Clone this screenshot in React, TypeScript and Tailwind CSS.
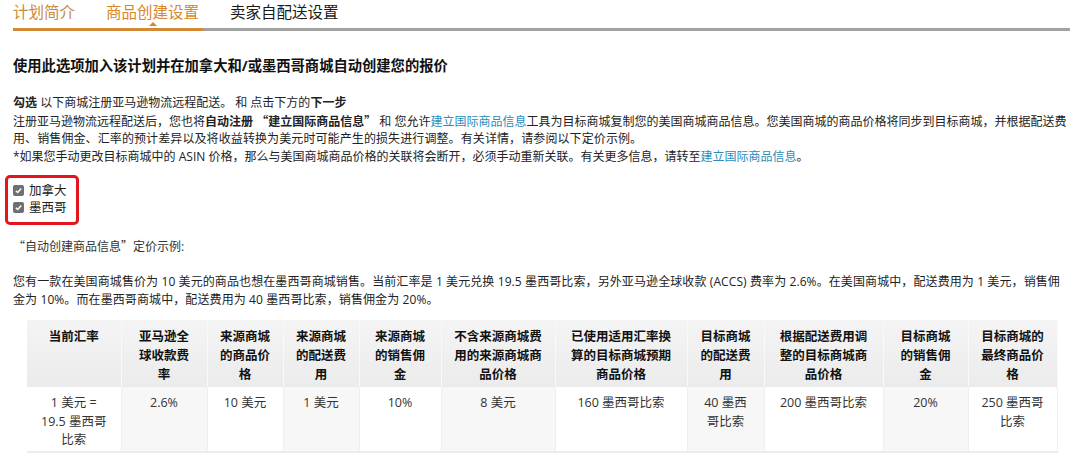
import React from "react";

const FONT = { fontFamily: '"Open Sans", "Noto Sans CJK SC", sans-serif' };

const cols = [94, 86, 76, 76, 82, 114, 132, 77, 119, 85, 89];
const colClasses = [
  "w-[94px]",
  "w-[86px]",
  "w-[76px]",
  "w-[76px]",
  "w-[82px]",
  "w-[114px]",
  "w-[132px]",
  "w-[77px]",
  "w-[119px]",
  "w-[85px]",
  "w-[89px]",
];

const headers: string[][] = [
  ["当前汇率"],
  ["亚马逊全", "球收款费", "率"],
  ["来源商城", "的商品价", "格"],
  ["来源商城", "的配送费", "用"],
  ["来源商城", "的销售佣", "金"],
  ["不含来源商城费", "用的来源商城商", "品价格"],
  ["已使用适用汇率换", "算的目标商城预期", "商品价格"],
  ["目标商城", "的配送费", "用"],
  ["根据配送费用调", "整的目标商城商", "品价格"],
  ["目标商城", "的销售佣", "金"],
  ["目标商城的", "最终商品价", "格"],
];

const body: string[][] = [
  ["1 美元 =", "19.5 墨西哥", "比索"],
  ["2.6%"],
  ["10 美元"],
  ["1 美元"],
  ["10%"],
  ["8 美元"],
  ["160 墨西哥比索"],
  ["40 墨西", "哥比索"],
  ["200 墨西哥比索"],
  ["20%"],
  ["250 墨西哥", "比索"],
];

function Check() {
  return (
    <span className="inline-flex h-[11px] w-[11px] items-center justify-center rounded-[2px] bg-[#6f6f6f]">
      <svg viewBox="0 0 10 10" className="h-[9px] w-[9px]">
        <path d="M2 5.2 L4.1 7.2 L8 2.8" fill="none" stroke="#fff" strokeWidth="1.6" />
      </svg>
    </span>
  );
}

function Q({ c }: { c: string }) {
  return <span className="font-['Noto_Sans_CJK_SC',sans-serif]">{c}</span>;
}

function Lines({ lines }: { lines: string[] }) {
  return (
    <>
      {lines.map((l, i) => (
        <div key={i} className="whitespace-nowrap">
          {l}
        </div>
      ))}
    </>
  );
}

export default function App() {
  return (
    <div className="min-h-[471px] w-[1080px] bg-white text-[#222]" style={FONT}>
      <div className="px-[13px]">
        {/* Tabs */}
        <div className="flex h-[28px] w-[1057px] items-start text-[15.5px] leading-[24px]">
          <div className="text-[#c98a3c]">计划简介</div>
          <div className="relative ml-[31px] text-[#d9862a]">
            商品创建设置
            <span className="absolute left-1/2 top-[22px] h-0 w-0 -translate-x-1/2 border-x-[4px] border-b-[4px] border-x-transparent border-b-[#d9862a]" />
          </div>
          <div className="ml-[31px] text-[#1a1a1a]">卖家自配送设置</div>
        </div>
        <div className="flex h-[3px] w-[1057px]">
          <div className="w-[190px] bg-[#d48a35]" />
          <div className="flex-1 bg-[#a2a2a2]" />
        </div>

        {/* Heading */}
        <h1 className="mt-[25px] text-[14.3px] font-bold leading-[20px] text-[#111]">
          使用此选项加入该计划并在加拿大和/或墨西哥商城自动创建您的报价
        </h1>

        {/* Paragraph 1 */}
        <div className="mt-[18px] text-[12px] leading-[17.5px] text-[#222]">
          <div className="whitespace-nowrap">
            <b>勾选</b> 以下商城注册亚马逊物流远程配送。 和 点击下方的<b>下一步</b>
          </div>
          <div className="whitespace-nowrap">
            注册亚马逊物流远程配送后，您也将
            <b>
              自动注册 <Q c="“" />建立国际商品信息<Q c="”" />
            </b>{" "}
            和 您允许
            <span className="text-[#2b8cba]">建立国际商品信息</span>
            工具为目标商城复制您的美国商城商品信息。您美国商城的商品价格将同步到目标商城，并根据配送费
          </div>
          <div className="whitespace-nowrap tracking-[0.1px]">
            用、销售佣金、汇率的预计差异以及将收益转换为美元时可能产生的损失进行调整。有关详情，请参阅以下定价示例。
          </div>
          <div className="whitespace-nowrap">
            *如果您手动更改目标商城中的 ASIN 价格，那么与美国商城商品价格的关联将会断开，必须手动重新关联。有关更多信息，请转至
            <span className="text-[#2b8cba]">建立国际商品信息</span>。
          </div>
        </div>

        {/* Checkbox group */}
        <div className="-ml-[8px] mt-[10px] w-[74px] rounded-[5px] border-[3px] border-[#e3161d] pb-[6px] pl-[5px] pt-[4px] text-[12.5px] leading-[17px]">
          <label className="flex items-center gap-[5px]">
            <Check />
            <span>加拿大</span>
          </label>
          <label className="flex items-center gap-[5px]">
            <Check />
            <span>墨西哥</span>
          </label>
        </div>

        {/* Example title */}
        <div className="mt-[12px] text-[12px] leading-[17.5px] text-[#333]">
          <Q c="“" />自动创建商品信息<Q c="”" />定价示例:
        </div>

        {/* Paragraph 2 */}
        <div className="mt-[17.5px] text-[12px] leading-[17.5px] text-[#222]">
          <div className="whitespace-nowrap tracking-[0.1px]">
            您有一款在美国商城售价为 10 美元的商品也想在墨西哥商城销售。当前汇率是 1 美元兑换 19.5 墨西哥比索，另外亚马逊全球收款 (ACCS) 费率为 2.6%。在美国商城中，配送费用为 1 美元，销售佣
          </div>
          <div className="whitespace-nowrap tracking-[0.1px]">
            金为 10%。而在墨西哥商城中，配送费用为 40 墨西哥比索，销售佣金为 20%。
          </div>
        </div>

        {/* Table */}
        <table className="ml-[14px] mt-[12px] w-[1030px] table-fixed border-collapse">
          <colgroup>
            {cols.map((_, i) => (
              <col key={i} className={colClasses[i]} />
            ))}
          </colgroup>
          <thead>
            <tr>
              {headers.map((h, i) => (
                <th
                  key={i}
                  className="h-[67px] border-r border-[#f9f9f9] bg-gradient-to-b from-[#f4f4f4] to-[#ebebeb] px-0 pb-[3px] pt-[7px] align-top text-[12.5px] font-bold leading-[19px] text-[#111]"
                >
                  <Lines lines={h} />
                </th>
              ))}
            </tr>
          </thead>
          <tbody>
            <tr className="border-b-2 border-[#ececec]">
              {body.map((b, i) => (
                <td
                  key={i}
                  className={
                    "h-[65px] border-r border-[#efefef] px-0 pt-[7px] text-center align-top text-[12.5px] leading-[18.5px] text-[#333] " +
                    (i % 2 === 1 ? "bg-[#f7f7f7]" : "bg-white")
                  }
                >
                  <Lines lines={b} />
                </td>
              ))}
            </tr>
          </tbody>
        </table>
      </div>
    </div>
  );
}
